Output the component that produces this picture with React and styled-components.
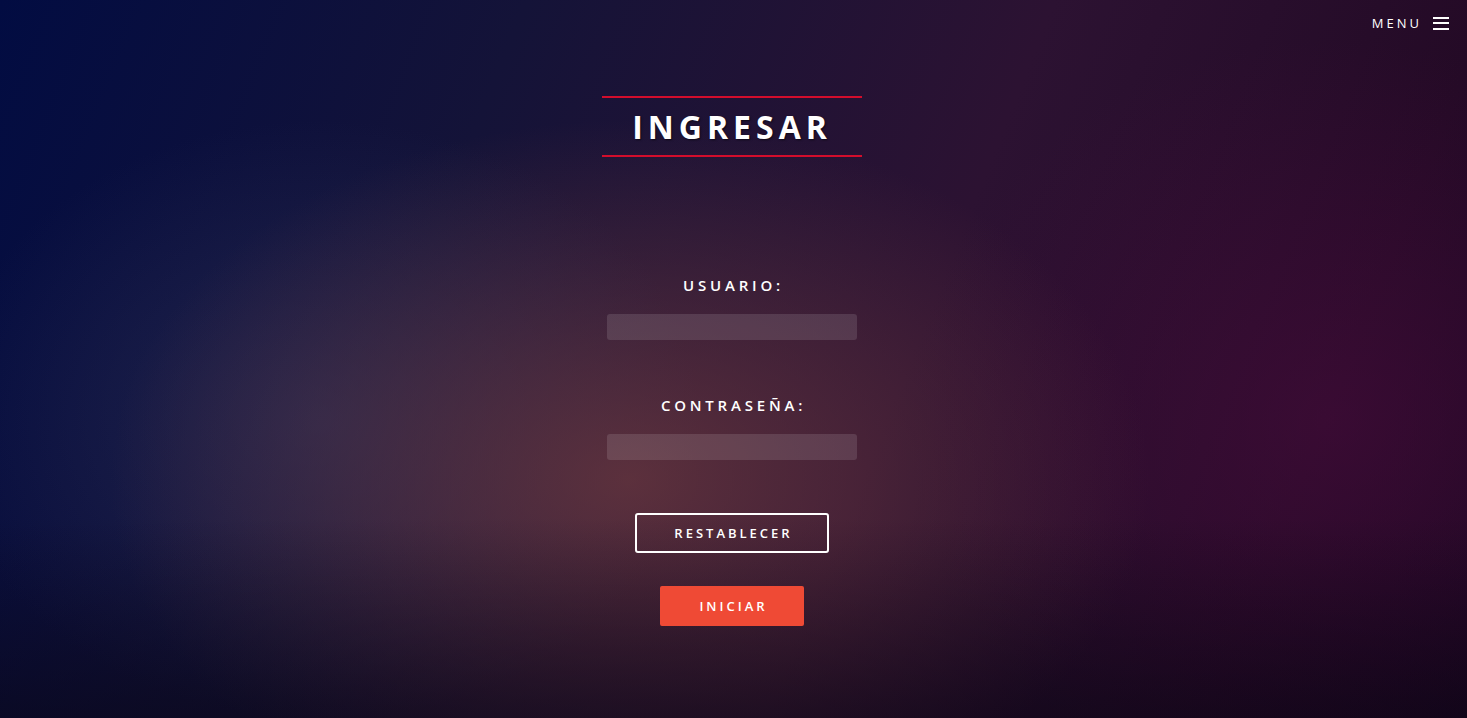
import React from "react";
import styled, { createGlobalStyle } from "styled-components";

const Global = createGlobalStyle`
  html, body, #root { margin: 0; padding: 0; height: 100%; }
  body { overflow: hidden; font-family: "Open Sans", "Liberation Sans", sans-serif; color: #fff; }
  * { box-sizing: border-box; }
`;

const Page = styled.div`
  min-height: 100vh;
  display: flex;
  flex-direction: column;
  background:
    linear-gradient(180deg, rgba(0,0,0,0) 72%, rgba(8,4,18,0.55) 100%),
    radial-gradient(ellipse 520px 360px at 630px 480px, rgba(108,56,62,0.78), rgba(108,56,62,0) 100%),
    radial-gradient(ellipse 380px 300px at 320px 420px, rgba(48,52,92,0.55), rgba(48,52,92,0) 100%),
    radial-gradient(ellipse 420px 380px at 1330px 420px, rgba(75,12,62,0.55), rgba(75,12,62,0) 100%),
    linear-gradient(112deg, #020c42 0%, #141338 30%, #2c1232 60%, #240a26 85%, #1a0620 100%);
`;

const Header = styled.header`
  height: 46px;
  display: flex;
  align-items: center;
  justify-content: flex-end;
  padding-right: 18px;
  gap: 11px;
`;

const MenuText = styled.span`
  font-size: 13px;
  letter-spacing: 3px;
  font-weight: 400;
`;

const Burger = styled.svg`
  display: block;
`;

const Main = styled.main`
  display: flex;
  flex-direction: column;
  align-items: center;
  padding-top: 50px;
  padding-right: 3px;
`;

const Title = styled.h1`
  margin: 0;
  width: 260px;
  height: 61px;
  border-top: 2px solid #d30d2c;
  border-bottom: 2px solid #d30d2c;
  display: flex;
  align-items: center;
  justify-content: center;
  font-size: 32px;
  font-weight: 700;
  letter-spacing: 5px;
  text-shadow: 1px 1px 2px rgba(0,0,0,0.6);
`;

const Form = styled.form`
  display: flex;
  flex-direction: column;
  align-items: center;
  margin-top: 118px;
`;

const Label = styled.label`
  font-size: 15px;
  font-weight: 600;
  letter-spacing: 3.8px;
  padding-left: 3px;
  line-height: 20px;
  margin-top: ${p => p.$first ? "0" : "55px"};
`;

const Input = styled.input`
  margin-top: 19px;
  width: 250px;
  height: 26px;
  border: none;
  border-radius: 3px;
  background: rgba(255, 255, 255, 0.12);
  outline: none;
  color: #fff;
`;

const Button = styled.button`
  height: 40px;
  padding: 0 34px 0 37px;
  border: 2px solid ${p => p.$primary ? "#ef4a35" : "#fff"};
  border-radius: ${p => p.$primary ? "2px" : "3px"};
  background: ${p => p.$primary ? "#ef4a35" : "transparent"};
  color: #fff;
  font-family: "Open Sans", "Liberation Sans", sans-serif;
  font-size: 13px;
  font-weight: 600;
  letter-spacing: 3px;
  cursor: pointer;
  margin-top: ${p => p.$primary ? "33px" : "53px"};
`;

export default function App() {
  return (
    <Page>
      <Global />
      <Header>
        <MenuText>MENU</MenuText>
        <Burger width="16" height="14" viewBox="0 0 16 14">
          <rect x="0" y="1" width="16" height="2" fill="#fff" />
          <rect x="0" y="6" width="16" height="2" fill="#fff" />
          <rect x="0" y="12" width="16" height="2" fill="#fff" />
        </Burger>
      </Header>
      <Main>
        <Title>INGRESAR</Title>
        <Form onSubmit={e => e.preventDefault()}>
          <Label $first>USUARIO:</Label>
          <Input type="text" />
          <Label>CONTRASEÑA:</Label>
          <Input type="password" />
          <Button type="reset">RESTABLECER</Button>
          <Button type="submit" $primary>INICIAR</Button>
        </Form>
      </Main>
    </Page>
  );
}
